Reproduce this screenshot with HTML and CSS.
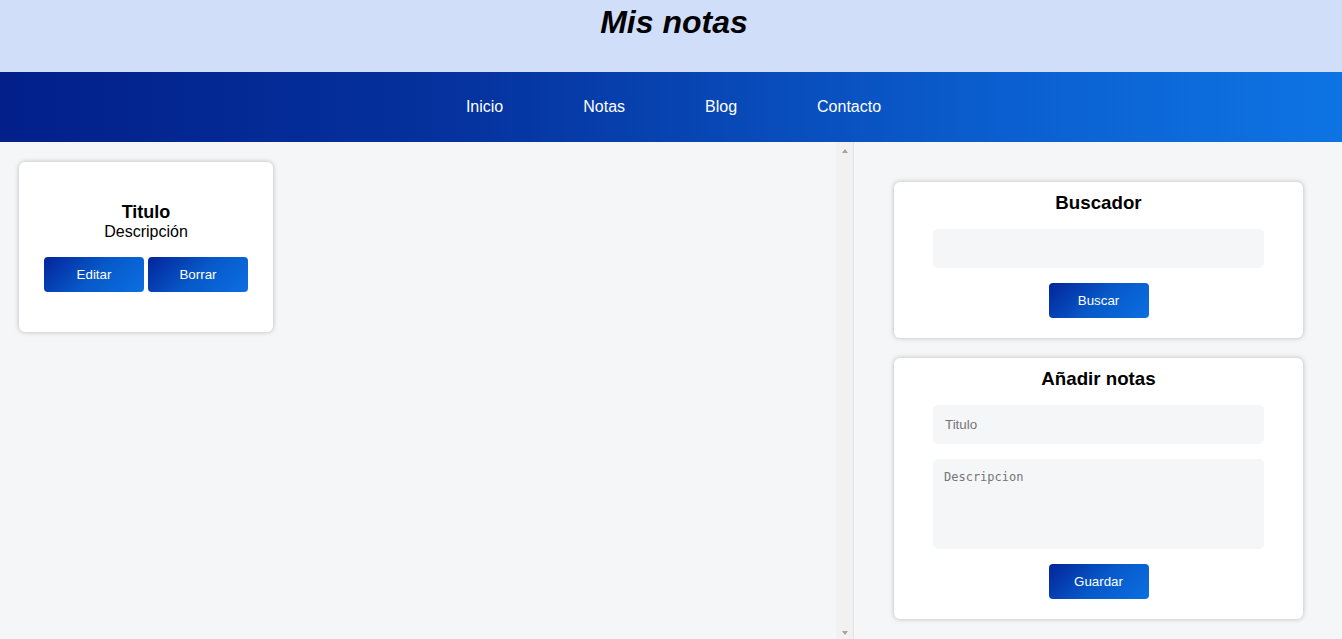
FILE: index.html
```html
<!DOCTYPE html>
<html lang="es">
<head>
<meta charset="utf-8">
<title>Mis notas</title>
<link rel="stylesheet" href="styles.css">
</head>
<body>
<header class="site-header">
  <h1 class="site-title">Mis notas</h1>
</header>
<nav class="main-nav">
  <a href="#" class="nav-link">Inicio</a>
  <a href="#" class="nav-link">Notas</a>
  <a href="#" class="nav-link">Blog</a>
  <a href="#" class="nav-link">Contacto</a>
</nav>
<main class="layout">
  <section class="notes">
    <div class="notes-list">
      <article class="note-card">
        <h3 class="note-title">Titulo</h3>
        <p class="note-desc">Descripción</p>
        <div class="note-actions">
          <button class="btn">Editar</button>
          <button class="btn">Borrar</button>
        </div>
      </article>
    </div>
    <div class="scrollbar" aria-hidden="true">
      <span class="arrow arrow-up"></span>
      <span class="arrow arrow-down"></span>
    </div>
  </section>
  <aside class="sidebar">
    <div class="panel">
      <h3 class="panel-title">Buscador</h3>
      <input class="field" type="text">
      <button class="btn btn-center">Buscar</button>
    </div>
    <div class="panel">
      <h3 class="panel-title">Añadir notas</h3>
      <input class="field" type="text" placeholder="Titulo">
      <textarea class="field field-area" placeholder="Descripcion"></textarea>
      <button class="btn btn-center">Guardar</button>
    </div>
  </aside>
</main>
</body>
</html>
```
FILE: styles.css
```css
* { box-sizing: border-box; }
html, body { margin: 0; padding: 0; }
body {
  font-family: "Liberation Sans", Arial, sans-serif;
  background: #f5f6f8;
  color: #000;
  height: 100vh;
  overflow: hidden;
}
.site-header {
  height: 72px;
  background: #d0defa;
  padding: 4px 0 0 6px;
  text-align: center;
}
.site-title {
  margin: 0;
  font-size: 32px;
  line-height: 37px;
  font-style: italic;
  font-weight: bold;
}
.main-nav {
  height: 70px;
  display: flex;
  justify-content: center;
  align-items: center;
  gap: 80px;
  padding-left: 5px;
  background: linear-gradient(90deg, #021f8a 0%, #05339f 35%, #0b5fd0 75%, #0e74e3 100%);
}
.nav-link {
  color: #fff;
  text-decoration: none;
  font-size: 16px;
}
.layout {
  display: grid;
  grid-template-columns: 854px 1fr;
  height: calc(100vh - 142px);
}
.notes {
  display: flex;
  min-height: 0;
}
.notes-list {
  flex: 1;
  padding: 20px 19px;
}
.scrollbar {
  width: 18px;
  background: #f1f1f1;
  border-right: 1px solid #e3e3e3;
  display: flex;
  flex-direction: column;
  justify-content: space-between;
  align-items: center;
  padding: 7px 0 4px;
}
.arrow {
  width: 0;
  height: 0;
  border-left: 3.5px solid transparent;
  border-right: 3.5px solid transparent;
}
.arrow-up { border-bottom: 4px solid #a3a3a3; }
.arrow-down { border-top: 4px solid #a3a3a3; }
.note-card {
  width: 254px;
  background: #fff;
  border-radius: 6px;
  box-shadow: 0 0 5px rgba(0, 0, 0, 0.25);
  padding: 40px 0;
  text-align: center;
}
.note-title {
  margin: 0;
  font-size: 18px;
  line-height: 21px;
  font-weight: bold;
}
.note-desc {
  margin: 0 0 16px;
  font-size: 16px;
  line-height: 18px;
}
.note-actions {
  display: flex;
  justify-content: center;
  gap: 4px;
}
.btn {
  width: 100px;
  height: 35px;
  border: none;
  border-radius: 4px;
  background: linear-gradient(135deg, #03259a 0%, #0758c8 50%, #0b6fe2 100%);
  color: #fff;
  font-family: "Liberation Sans", Arial, sans-serif;
  font-size: 13.33px;
  cursor: pointer;
}
.btn-center {
  display: block;
  margin: 0 auto;
}
.sidebar {
  padding: 40px 39px 0 40px;
  overflow: hidden;
}
.panel {
  background: #fff;
  border-radius: 6px;
  box-shadow: 0 0 5px rgba(0, 0, 0, 0.25);
  padding: 10px 0 20px;
  margin-bottom: 20px;
}
.panel-title {
  margin: 0 0 15px;
  text-align: center;
  font-size: 18.72px;
  line-height: 22px;
  font-weight: bold;
}
.field {
  display: block;
  width: 331px;
  height: 39px;
  margin: 0 auto 15px;
  border: none;
  border-radius: 5px;
  background: #f5f6f8;
  padding: 0 12px;
  font-family: "Liberation Sans", Arial, sans-serif;
  font-size: 13.33px;
  color: #000;
  outline: none;
}
.field::placeholder { color: #757575; }
.field-area {
  height: 90px;
  padding: 11px 11px;
  resize: none;
  font-family: "DejaVu Sans Mono", "Liberation Mono", monospace;
  font-size: 12px;
}
```
